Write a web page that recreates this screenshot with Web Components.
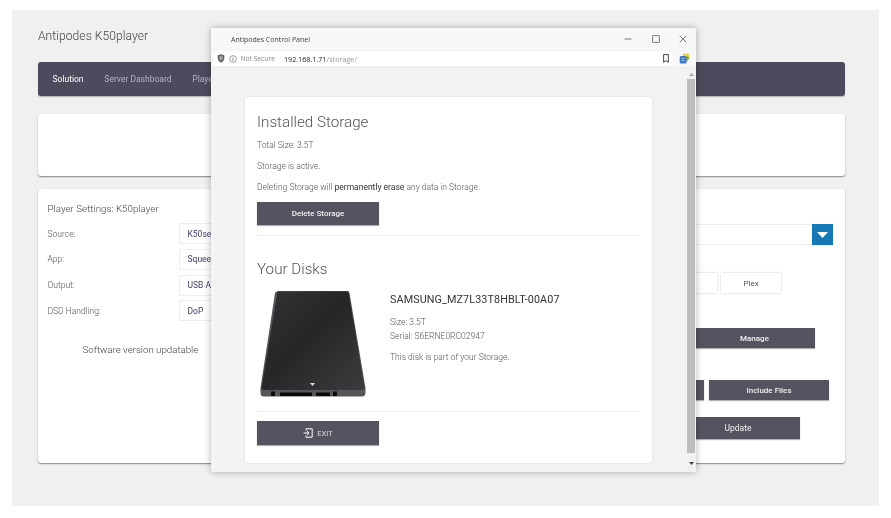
<!doctype html>
<html lang="en"><head><meta charset="utf-8"><title>Antipodes K50player</title>
<style>html,body{margin:0;height:518px;overflow:hidden;background:#fff;font-family:Roboto,"Liberation Sans",sans-serif;color:#555}body{filter:blur(.3px)}</style>
</head><body>
<k-app>
  <nav-bar slot="nav"></nav-bar>
  <player-card slot="player"></player-card>
</k-app>
<browser-window>
  <storage-card></storage-card>
</browser-window>
<script>
const def=(name,html)=>{customElements.define(name,class extends HTMLElement{constructor(){super();this.attachShadow({mode:'open'}).innerHTML=html}})};
def('k-app',`<style>
:host{display:block;height:518px;box-sizing:border-box;padding:10px 12px 12px}
.panel{background:#f0f0f1;height:100%;box-sizing:border-box;padding:16px 34px 0 26px;width:867px}
h1{margin:0 0 16px;font:300 12.100px/20px Roboto,sans-serif;color:#444;letter-spacing:.05px}
.blank{height:62px;background:#fff;border-radius:3px;margin:18px 0 13px;box-shadow:0 1px 1.5px rgba(0,0,0,.45)}
</style><div class="panel"><h1>Antipodes K50player</h1><slot name="nav"></slot><div class="blank"></div><slot name="player"></slot></div>`);
def('nav-bar',`<style>
:host{display:flex;height:34px;box-sizing:border-box;background:#4b4b5d;border-radius:3px;padding-left:14.500px;align-items:center;gap:20.800px;font:400 8.500px Roboto,sans-serif;color:#b4b4be;box-shadow:0 1px 1px rgba(0,0,0,.25)}
.on{color:#fff}
</style><span class="on">Solution</span><span>Server Dashboard</span><span>Player</span>`);
def('k-btn',`<style>
:host{display:flex;align-items:center;justify-content:center;box-sizing:border-box;height:20px;width:120px;background:#55535f;color:#f1f1f1;font:500 8px Roboto,sans-serif;box-shadow:0 1px 1px rgba(0,0,0,.3)}
:host([light]){background:#fff;color:#555;font-weight:400;box-shadow:0 0 2px rgba(0,0,0,.22)}
</style><slot></slot>`);
def('player-card',`<style>
:host{display:grid;grid-template-columns:403px 1fr;height:274px;box-sizing:border-box;background:#fff;border-radius:3px;box-shadow:0 1px 1.5px rgba(0,0,0,.45);font:300 8.500px Roboto,sans-serif;color:#555}
.left{padding:11.500px 0 0 9.500px}
h2{margin:0 0 6.500px;font:300 9.800px/16px Roboto,sans-serif;color:#444}
.form{display:grid;grid-template-columns:131px 130px;grid-auto-rows:21px;row-gap:4.800px;align-items:center}
.val{height:21px;box-sizing:border-box;border:1px solid #eee;padding:0 8px;display:flex;align-items:center;color:#3f4270;font-weight:400}
.soft{margin:21.500px 0 0 35px;font:300 9.700px/14px Roboto,sans-serif;color:#444}
.right{padding:35px 12px 0 0;display:flex;flex-direction:column;align-items:flex-end}
.sel{display:flex;width:100%;height:21px;border:1px solid #eee;border-right:0;box-sizing:border-box;justify-content:flex-end}
.arrow{width:21px;height:21px;margin-top:-1px;background:#1679b5;display:flex;align-items:center;justify-content:center}
.row{display:flex;gap:5px}
</style>
<div class="left"><h2>Player Settings: K50player</h2>
<div class="form"><span>Source:</span><span class="val">K50server</span><span>App:</span><span class="val">Squeezelite</span><span>Output:</span><span class="val">USB Audio</span><span>DSD Handling:</span><span class="val">DoP</span></div>
<div class="soft">Software version updatable</div></div>
<div class="right">
<div class="sel"><span class="arrow"><svg width="11" height="6" viewBox="0 0 11 6"><path d="M0 0h11L5.500 6z" fill="#fff"/></svg></span></div>
<div class="row" style="margin:28px 52px 0 0;gap:4.500px"><k-btn light style="width:60px">Files</k-btn><k-btn light style="width:60px">Plex</k-btn></div>
<k-btn style="margin:35px 18px 0 0;width:121px">Manage</k-btn>
<div class="row" style="margin:32px 4px 0 0"><k-btn style="width:120px">Exclude Files</k-btn><k-btn>Include Files</k-btn></div>
<k-btn style="margin:17px 33px 0 0;width:124px;height:21.500px;font:400 8.500px Roboto,sans-serif">Update</k-btn>
</div>`);
def('browser-window',`<style>
:host{position:absolute;left:211px;top:28px;width:485px;height:444px;display:flex;flex-direction:column;background:#f3f3f3;box-shadow:0 0 7px rgba(0,0,0,.3);font-family:"Open Sans","Noto Sans",sans-serif;color:#444;overflow:hidden}
.title{height:22px;display:flex;align-items:center;padding-left:20px;font-size:7px;flex:none;background:#f7f7f7}
.title span{flex:1}
.ctl{display:flex;justify-content:space-between;padding-right:9px;width:63px;align-items:center}
.bar{height:17px;display:flex;align-items:center;flex:none;background:#f7f7f7}
.addr{margin-left:2px;width:460px;height:15.500px;background:#fff;border-radius:3px;display:flex;align-items:center;box-sizing:border-box;padding:0 4px 0 4px;font-size:7.200px;box-shadow:0 0 1px rgba(0,0,0,.12)}
.ns{color:#888;margin:0 9px 0 3.500px;font-size:6.700px}
.host{color:#222}.path{color:#999;flex:1}
.main{flex:1;display:flex;min-height:0;border-top:1px solid #eee}
.scroll{flex:1;box-sizing:border-box;padding:29px 35px 9px 34px;display:flex}
.sb{width:8px;margin-right:1px;display:flex;flex-direction:column;align-items:center;background:#f1f1f1;padding-top:5px;box-sizing:border-box}
.thumb{width:8px;height:374px;background:#bdbdbd;margin:3px 0 9px}
</style>
<div class="title"><span>Antipodes Control Panel</span>
<div class="ctl">
<svg width="8" height="8" viewBox="0 0 8 8"><path d="M.5 4h7" stroke="#555" stroke-width=".8"/></svg>
<svg width="8" height="8" viewBox="0 0 8 8"><rect x=".6" y=".6" width="6.800" height="6.800" rx=".6" fill="none" stroke="#555" stroke-width=".8"/></svg>
<svg width="8" height="8" viewBox="0 0 8 8"><path d="M.7.7l6.600 6.600M7.300.7L.7 7.300" stroke="#555" stroke-width=".8"/></svg>
</div></div>
<div class="bar"><div class="addr">
<svg width="8" height="9" viewBox="0 0 8 9" style="margin-right:4px"><path d="M4 .3l3.300 1v3.200c0 2-1.500 3.300-3.300 4.100C2.200 7.800.7 6.500.7 4.500V1.300z" fill="#666"/><path d="M2.500 2.300h3v3.500h-3z" fill="#aaa"/></svg>
<svg width="8" height="8" viewBox="0 0 8 8"><circle cx="4" cy="4" r="3.400" fill="none" stroke="#666" stroke-width=".6"/><path d="M4 3.400v2.600M4 2v.8" stroke="#555" stroke-width=".7"/></svg>
<span class="ns">Not Secure</span><span class="host">192.168.1.71</span><span class="path">/storage/</span>
<svg width="6" height="9" viewBox="0 0 6 9"><path d="M.6.600h4.800v7.600L3 6.700.6 8.200z" fill="none" stroke="#333" stroke-width=".9"/></svg>
</div>
<svg width="11" height="11" viewBox="0 0 11 11" style="margin-left:6px"><path d="M4 .5h5.500L10.500 5 8 8H4z" fill="#e6d23c"/><path d="M7.500 2.500l3 2.500L8 8z" fill="#6fb04a"/><rect x=".7" y="3" width="7" height="7.500" rx="1.500" fill="#3f78c6"/><path d="M2.500 5h3v1h-3zm0 2h3v1h-3z" fill="#9cc0ea"/></svg>
</div>
<div class="main"><div class="scroll"><slot></slot></div>
<div class="sb"><svg width="5" height="3" viewBox="0 0 5 3"><path d="M0 3h5L2.500 0z" fill="#aaa"/></svg><div class="thumb"></div><svg width="5" height="3" viewBox="0 0 5 3"><path d="M0 0h5L2.500 3z" fill="#444"/></svg></div></div>`);
def('storage-card',`<style>
:host{display:block;flex:1;box-sizing:border-box;background:#fff;border-radius:3px;padding:14.500px 12px 0;box-shadow:0 0 2px rgba(0,0,0,.14);font:300 8.500px Roboto,sans-serif;color:#555}
h2{margin:0;font:300 15.200px/20px Roboto,sans-serif;color:#555}
p{margin:0;line-height:13px}
.stack{margin-top:7px;display:flex;flex-direction:column;gap:8px}
b{font-weight:400;color:#333}
hr{border:0;border-top:1px solid #eee;margin:10px 0}
.disk{display:flex;margin-top:11px;height:110px}
svg.ssd{flex:none;margin:0 24px 0 3px}
h3{margin:3px 0 8px;font:400 10.800px/14px Roboto,sans-serif;color:#333;letter-spacing:.1px}
.meta p{line-height:14px}
.gap{margin-top:7px}
</style>
<h2>Installed Storage</h2>
<div class="stack"><p>Total Size: 3.5T</p><p>Storage is active.</p><p>Deleting Storage will <b>permanently erase</b> any data in Storage.</p></div>
<k-btn style="margin-top:8.500px;height:23px;width:122px">Delete Storage</k-btn>
<hr>
<h2 style="margin-top:23px">Your Disks</h2>
<div class="disk">
<svg class="ssd" width="106" height="110" viewBox="0 0 106 110">
<defs><linearGradient id="g" x1="0" y1="0" x2="1" y2="1"><stop offset="0" stop-color="#333336"/><stop offset=".45" stop-color="#262628"/><stop offset="1" stop-color="#3c3c3f"/></linearGradient></defs>
<path d="M17 1.500Q17.500 1 19 1H87Q89 1 89.500 3L105.500 98V103Q105 106.500 102 106.500H4Q.5 106.500 .5 103V98L15 3Q15.500 1.500 17 1.500Z" fill="#56565a"/>
<path d="M17.500 1.500H88.500L104.500 98Q104.500 100 102 100H3Q1 100 1.500 98Z" fill="url(#g)"/>
<path d="M50 93h5l-2.500 3z" fill="#ddd"/>
<path d="M20 102.500h32v3.500H20zM56 102.500h14v3.500H56zM11 101.500h4v4.500h-4zM73 101.500h4v4.500h-4z" fill="#0a0a0a"/>
</svg>
<div class="meta"><h3>SAMSUNG_MZ7L33T8HBLT-00A07</h3><p>Size: 3.5T</p><p>Serial: S6ERNE0RC02947</p><p class="gap">This disk is part of your Storage.</p></div>
</div>
<hr style="margin:11px 0 9px">
<k-btn style="height:24px;width:122px;font:400 7.500px Roboto,sans-serif;color:#ddd">
<svg width="10" height="10" viewBox="0 0 10 10" style="margin-right:4px"><path d="M3 2.500V.8h6.200v8.400H3V7.500" fill="none" stroke="#fff" stroke-width="1"/><path d="M.5 5h5M4 3l2 2-2 2" fill="none" stroke="#fff" stroke-width="1"/></svg>EXIT</k-btn>`);
</script>
</body></html>
